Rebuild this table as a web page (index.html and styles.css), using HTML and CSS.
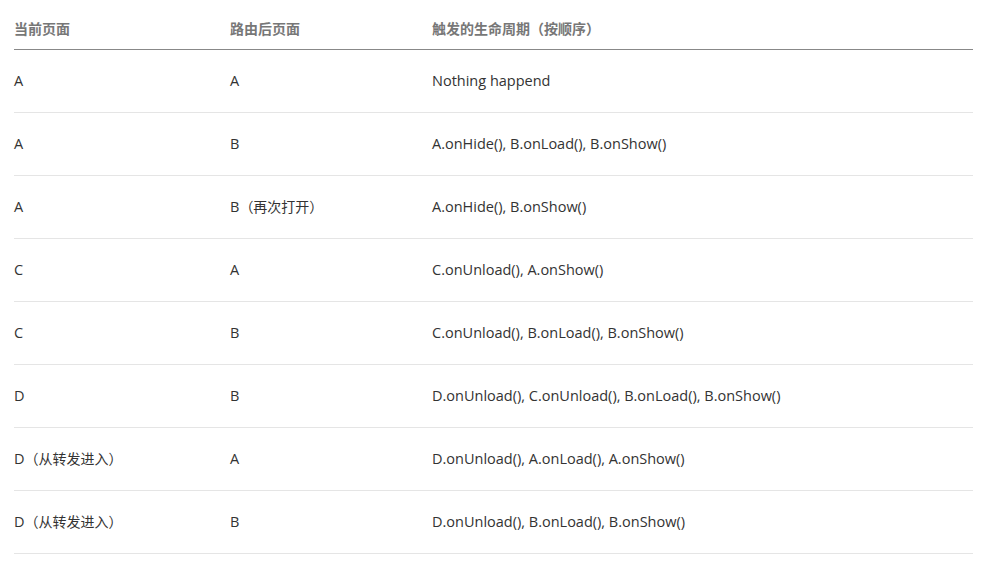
FILE: index.html
```html
<!DOCTYPE html>
<html lang="zh">
<head>
<meta charset="utf-8">
<link rel="stylesheet" href="styles.css">
</head>
<body>
<table class="lifecycle">
  <colgroup>
    <col class="c1"><col class="c2"><col class="c3">
  </colgroup>
  <thead>
    <tr><th>当前页面</th><th>路由后页面</th><th>触发的生命周期（按顺序）</th></tr>
  </thead>
  <tbody>
    <tr><td>A</td><td>A</td><td>Nothing happend</td></tr>
    <tr><td>A</td><td>B</td><td>A.onHide(), B.onLoad(), B.onShow()</td></tr>
    <tr><td>A</td><td>B<span class="note">（再次打开）</span></td><td>A.onHide(), B.onShow()</td></tr>
    <tr><td>C</td><td>A</td><td>C.onUnload(), A.onShow()</td></tr>
    <tr><td>C</td><td>B</td><td>C.onUnload(), B.onLoad(), B.onShow()</td></tr>
    <tr><td>D</td><td>B</td><td>D.onUnload(), C.onUnload(), B.onLoad(), B.onShow()</td></tr>
    <tr><td>D<span class="note">（从转发进入）</span></td><td>A</td><td>D.onUnload(), A.onLoad(), A.onShow()</td></tr>
    <tr><td>D<span class="note">（从转发进入）</span></td><td>B</td><td>D.onUnload(), B.onLoad(), B.onShow()</td></tr>
  </tbody>
</table>
</body>
</html>
```
FILE: styles.css
```css
html, body {
  margin: 0;
  padding: 0;
  background: #fff;
}
.lifecycle {
  margin-left: 14px;
  width: 959px;
  border-collapse: collapse;
  table-layout: fixed;
  font-family: "Open Sans", "Noto Sans CJK SC", sans-serif;
  font-size: 14.5px;
  line-height: 20px;
  color: #333;
}
.c1 { width: 216px; }
.c2 { width: 202px; }
.c3 { width: 541px; }
.lifecycle th {
  text-align: left;
  font-weight: bold;
  font-size: 14px;
  color: #777;
  padding: 19px 0 10px 0;
  border-bottom: 1px solid #888;
}
.lifecycle td {
  padding: 21px 0;
  border-bottom: 1px solid #e5e5e5;
}
.note {
  font-size: 14px;
}
```
